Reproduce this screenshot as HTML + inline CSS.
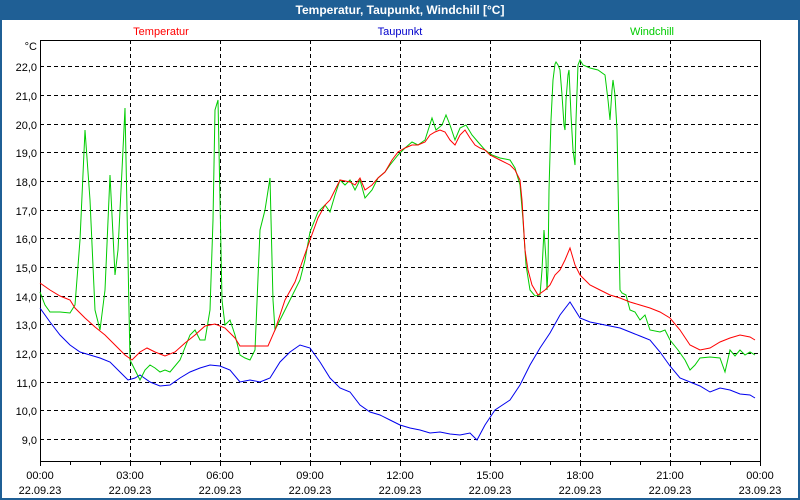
<!DOCTYPE html>
<html><head><meta charset="utf-8"><style>
html,body{margin:0;padding:0;width:800px;height:500px;overflow:hidden;background:#1f5f95;}
svg{display:block;font-family:"Liberation Sans","DejaVu Sans",sans-serif;}
</style></head><body>
<svg width="800" height="500" viewBox="0 0 800 500">
<rect x="0" y="0" width="800" height="500" fill="#1f5f95"/>
<rect x="2" y="20" width="796" height="478" fill="#fff"/>
<text x="400" y="14" text-anchor="middle" font-size="12" font-weight="bold" fill="#fff">Temperatur, Taupunkt, Windchill [°C]</text>
<text x="161" y="35" text-anchor="middle" font-size="11" fill="#ff0000">Temperatur</text>
<text x="400" y="35" text-anchor="middle" font-size="11" fill="#0000cc">Taupunkt</text>
<text x="652" y="35" text-anchor="middle" font-size="11" fill="#00cc00">Windchill</text>
<g stroke="#000" stroke-width="1" stroke-dasharray="4,3" fill="none">
<path d="M40 66.5H760M40 95.5H760M40 124.5H760M40 152.5H760M40 181.5H760M40 210.5H760M40 238.5H760M40 267.5H760M40 296.5H760M40 324.5H760M40 353.5H760M40 382.5H760M40 410.5H760M40 439.5H760"/>
<path d="M130.5 40V461M220.5 40V461M310.5 40V461M400.5 40V461M490.5 40V461M580.5 40V461M670.5 40V461"/>
</g>
<rect x="40.5" y="40.5" width="720" height="421" fill="none" stroke="#000"/>
<g stroke="#000"><path d="M40.5 461V466M70.5 461V465M100.5 461V465M130.5 461V466M160.5 461V465M190.5 461V465M220.5 461V466M250.5 461V465M280.5 461V465M310.5 461V466M340.5 461V465M370.5 461V465M400.5 461V466M430.5 461V465M460.5 461V465M490.5 461V466M520.5 461V465M550.5 461V465M580.5 461V466M610.5 461V465M640.5 461V465M670.5 461V466M700.5 461V465M730.5 461V465M760.5 461V466"/></g>
<g font-size="11" fill="#000" text-anchor="end">
<text x="37" y="50">°C</text>
<text x="37" y="71">22,0</text><text x="37" y="100">21,0</text><text x="37" y="129">20,0</text><text x="37" y="157">19,0</text><text x="37" y="186">18,0</text><text x="37" y="215">17,0</text><text x="37" y="243">16,0</text><text x="37" y="272">15,0</text><text x="37" y="301">14,0</text><text x="37" y="329">13,0</text><text x="37" y="358">12,0</text><text x="37" y="387">11,0</text><text x="37" y="415">10,0</text><text x="37" y="444">9,0</text>
</g>
<g font-size="11" fill="#000" text-anchor="middle">
<text x="40" y="479">00:00</text><text x="40" y="494">22.09.23</text>
<text x="130" y="479">03:00</text><text x="130" y="494">22.09.23</text>
<text x="220" y="479">06:00</text><text x="220" y="494">22.09.23</text>
<text x="310" y="479">09:00</text><text x="310" y="494">22.09.23</text>
<text x="400" y="479">12:00</text><text x="400" y="494">22.09.23</text>
<text x="490" y="479">15:00</text><text x="490" y="494">22.09.23</text>
<text x="580" y="479">18:00</text><text x="580" y="494">22.09.23</text>
<text x="670" y="479">21:00</text><text x="670" y="494">22.09.23</text>
<text x="760" y="479">00:00</text><text x="760" y="494">23.09.23</text>
</g>
<g fill="none" stroke-width="1">
<polyline stroke="#0000ee" points="40,308 50,322 60,335 70,345 80,352 90,355 100,358 110,362 120,372 128,380 135,378 140,375 150,382 160,386 170,385 180,378 190,372 200,368 210,365 220,366 230,370 240,382 250,380 260,382 270,378 280,362 290,352 300,345 310,348 320,362 330,378 340,388 350,392 360,405 370,412 380,415 390,420 400,425 410,428 420,430 430,433 440,432 450,434 460,435 470,433 477,440 485,425 495,410 510,400 520,385 530,365 540,348 550,333 560,315 570,302 575,310 580,318 590,322 600,324 610,326 620,328 630,332 640,336 650,340 660,352 670,366 680,378 690,382 700,386 710,392 720,388 730,390 740,394 750,395 755,398"/>
<polyline stroke="#00cc00" points="40,292 45,305 50,312 60,312 70,313 75,305 80,240 85,130 90,200 95,310 100,330 105,290 110,175 115,275 118,250 122,170 125,108 128,260 130,360 135,370 140,380 145,370 150,365 155,368 160,372 165,370 170,372 180,360 190,335 195,330 200,340 205,340 210,310 213,220 215,110 218,100 222,300 225,325 230,320 235,335 240,355 245,358 250,360 255,350 260,230 265,210 270,178 273,300 275,330 280,320 290,300 300,280 305,260 310,232 318,212 325,205 330,212 335,195 340,180 345,185 350,180 355,190 360,180 365,198 372,190 378,178 385,172 390,165 398,155 405,148 412,142 418,145 425,140 432,118 436,130 442,125 446,115 450,125 455,140 460,128 466,125 472,135 478,142 485,150 492,155 500,158 510,160 515,168 520,185 523,220 526,265 530,290 535,296 540,295 542,270 544,230 546,260 547,290 548,270 549,190 551,120 553,80 555,64 556,62 558,65 560,70 562,95 564,125 565,130 566,100 568,75 569,70 571,115 573,150 575,165 576,120 578,65 580,60 583,65 590,68 598,70 605,75 608,100 610,120 612,90 613,80 615,95 617,130 620,290 622,293 626,295 630,310 635,312 640,320 645,315 650,330 660,332 665,330 670,340 678,350 685,360 690,370 695,365 700,358 710,357 720,358 725,372 730,350 735,356 740,350 745,355 750,352 755,355"/>
<polyline stroke="#ff0000" points="40,283 50,290 60,296 70,300 75,308 85,318 95,327 105,335 115,345 125,355 132,360 140,352 147,348 155,352 165,356 175,352 185,343 195,335 205,326 215,324 225,328 235,338 240,346 250,346 260,346 268,346 275,330 285,300 295,282 300,268 310,240 318,218 325,205 330,200 335,190 340,180 350,182 355,185 360,178 365,190 372,185 378,178 385,172 392,160 398,152 405,148 412,145 418,145 425,142 430,135 435,132 440,130 445,132 450,140 455,145 460,135 465,130 470,138 475,145 480,148 485,150 490,155 500,160 510,165 515,170 520,180 522,200 525,250 528,270 532,285 538,295 545,290 550,285 555,275 560,270 565,260 570,248 575,265 580,275 585,280 590,285 600,290 610,295 620,298 630,302 640,305 650,308 660,312 670,318 680,330 690,345 700,350 710,348 720,342 730,338 740,335 750,337 755,340"/>
</g>
</svg>
</body></html>
